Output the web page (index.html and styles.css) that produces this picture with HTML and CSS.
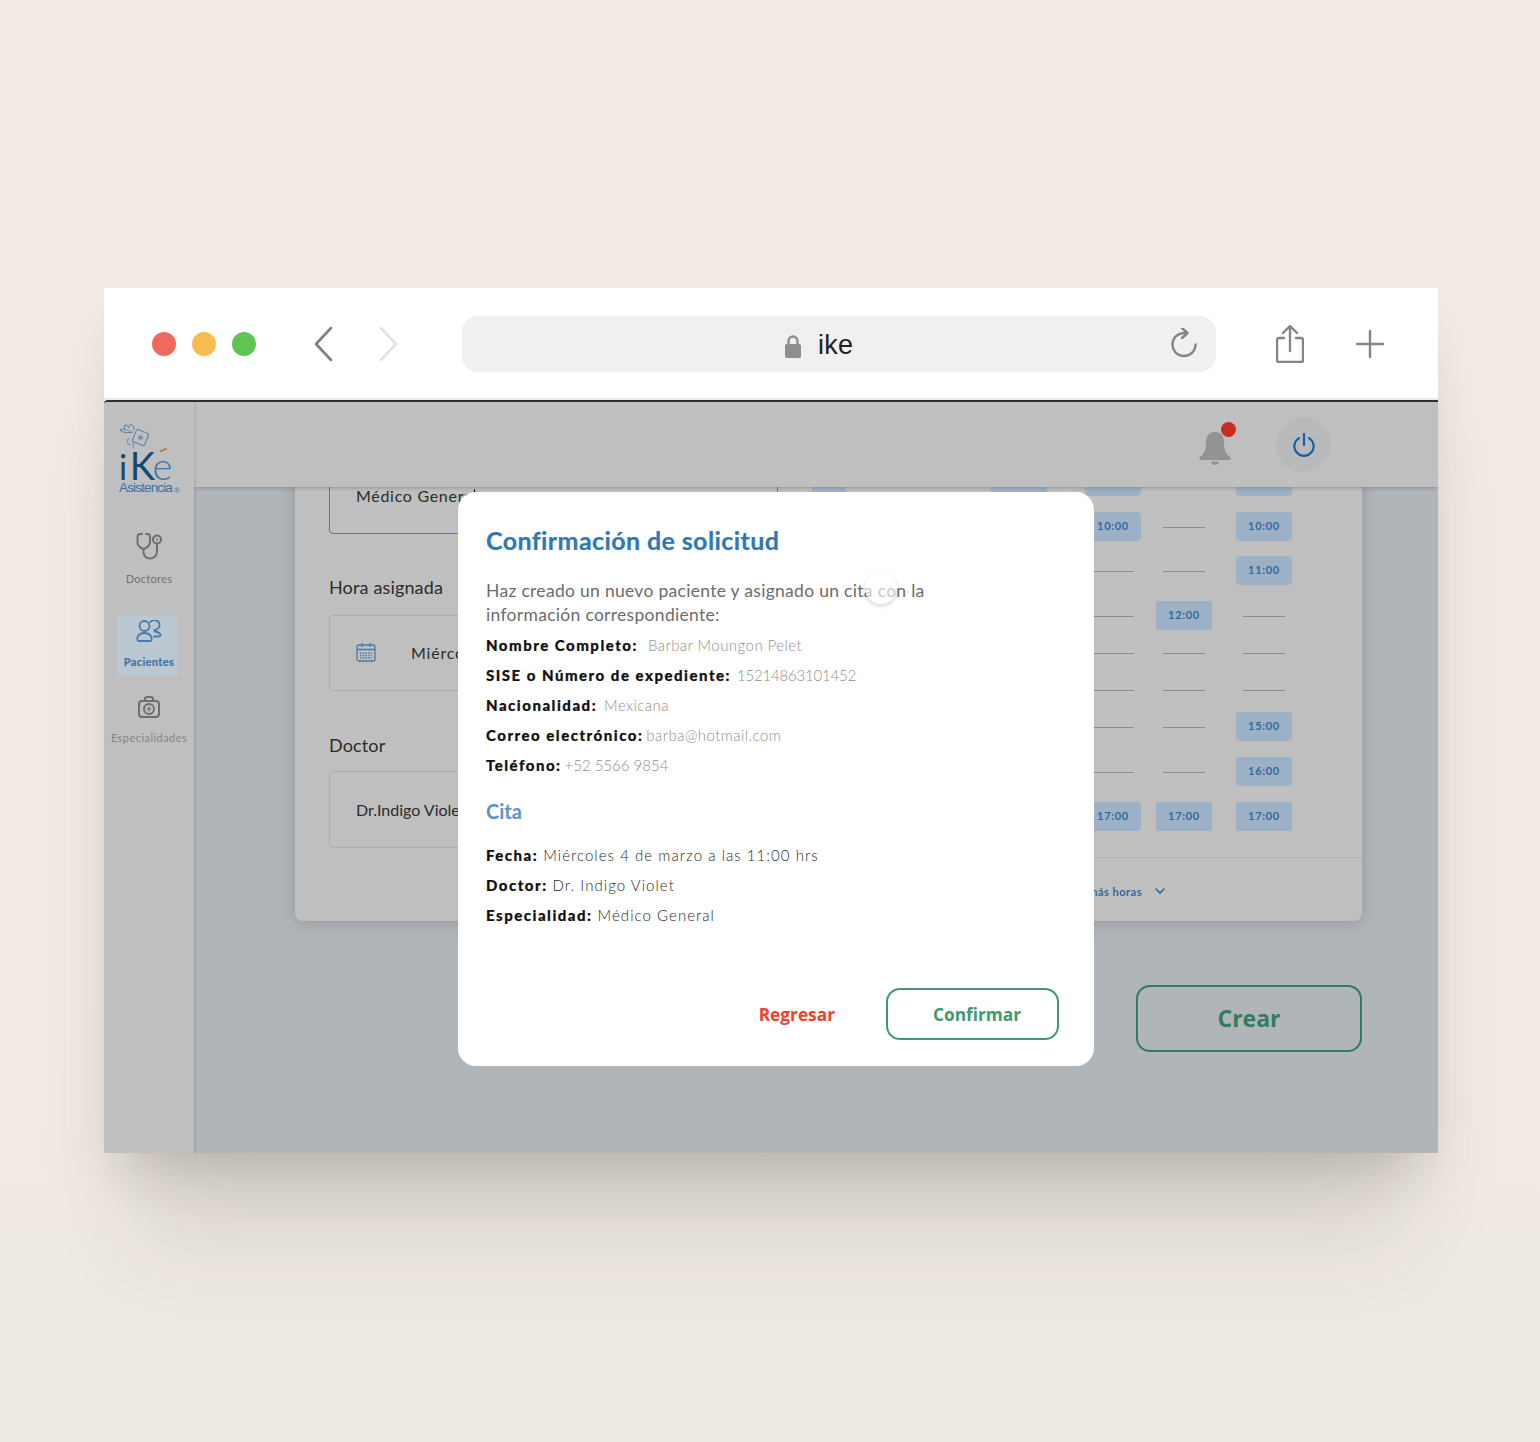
FILE: index.html
```html
<!DOCTYPE html>
<html lang="es">
<head>
<meta charset="utf-8">
<title>ike</title>
<link rel="stylesheet" href="styles.css">
</head>
<body>
<div class="window">
  <div class="toolbar">
    <div class="dots"><i class="dot red"></i><i class="dot yellow"></i><i class="dot green"></i></div>
    <div class="nav">
      <svg class="ico-nav" viewBox="0 0 20 36"><path d="M18 2 3 18l15 16" class="st-back"/></svg>
      <svg class="ico-nav" viewBox="0 0 20 36"><path d="M2 2l15 16L2 34" class="st-fwd"/></svg>
    </div>
    <div class="url">
      <svg class="lock" viewBox="0 0 16 23"><path d="M3.5 10V6a4.5 4.5 0 0 1 9 0v4" class="st-lock"/><rect x="0" y="9" width="16" height="14" rx="2" class="fill-lock"/></svg>
      <span class="url-text">ike</span>
      <svg class="reload" viewBox="0 0 26 30"><path d="M15 5.2A11.500 11.500 0 1 0 24.500 16.500M11 0l5.500 5L11 10" class="st-tool"/></svg>
    </div>
    <svg class="share" viewBox="0 0 28 38"><path d="M8 13H3a2 2 0 0 0-2 2v20a2 2 0 0 0 2 2h22a2 2 0 0 0 2-2V15a2 2 0 0 0-2-2h-5M14 26V2M7 8l7-7 7 7" class="st-tool"/></svg>
    <svg class="plus" viewBox="0 0 28 28"><path d="M14 1v26M1 14h26" class="st-tool"/></svg>
  </div>
  <div class="app">
    <aside class="sidebar">
      <div class="logo">
        <svg class="logo-mark" viewBox="0 0 32 28">
          <path d="M14 9C10 10 4 10 1 7c2-1 3-1 5-.5C5 5 5 3 6 2c2 0 3 1 4 2.500C10 3 11 1.500 12 1c2 1 3 3 3 6" class="st-logo"/>
          <path d="M6 6.500c2 .5 4 1.500 6 2M13 19l2 2-1 4M11 15l-3 2 1 4 3 1" class="st-logo-thin"/>
          <rect x="15" y="8" width="13" height="13" rx="2" transform="rotate(22 21.500 14.500)" class="st-logo"/>
          <path d="M21.500 11.500v6M18.500 14.500h6M19.300 12.300l4.400 4.400M23.700 12.300l-4.400 4.400" class="st-logo-thin"/>
        </svg>
        <div class="logo-word"><span class="logo-i">i</span><span class="logo-k">K</span><span class="logo-e">e</span><i class="logo-accent"></i></div>
        <div class="logo-sub">Asistencia<sup>®</sup></div>
      </div>
      <a class="side-item doctores">
        <svg class="ico-side" viewBox="0 0 26 28"><path d="M6 2H4Q1.500 2 1.500 5v5c0 3 2.500 6 6 7v3c0 4 3 6.500 6.500 6.500s7-2.500 7-7V12M10 2h1.500Q14 2 14 5v5c0 3-3 6-6.500 7" class="st-grey"/><circle cx="21" cy="7.500" r="4" class="st-grey"/><circle cx="21" cy="7.500" r="1" class="fill-grey"/></svg>
        <span>Doctores</span>
      </a>
      <a class="side-item active">
        <svg class="ico-side" viewBox="0 0 26 22"><circle cx="8.500" cy="6" r="5" class="st-blue"/><path d="M1.500 20c-1-4 2.500-7 7-7s8 3 7 7q-.3 1-1.500 1H3q-1.200 0-1.500-1z" class="st-blue"/><path d="M14.500 2a5 5 0 1 1 4 8v1.500c2 .5 6 .5 6 3.500 0 1-.5 1.500-1.500 1.500h-5" class="st-blue"/></svg>
        <span>Pacientes</span>
      </a>
      <a class="side-item especialidades">
        <svg class="ico-side" viewBox="0 0 22 22"><rect x="1" y="5" width="20" height="16" rx="3" class="st-grey"/><path d="M7 5V3q0-2 2-2h4q2 0 2 2v2" class="st-grey"/><circle cx="11" cy="13" r="5" class="st-grey"/><path d="M11 10.500v5M8.500 13h5" class="st-grey-thin"/></svg>
        <span>Especialidades</span>
      </a>
    </aside>
    <div class="content">
      <header class="topbar">
        <div class="bell">
          <svg class="bell-ico" viewBox="0 0 34 34"><path d="M17 1c-6 0-9 4-9 10 0 8-2 12-6 15-1.500 1-1 3 1 3h28c2 0 2.500-2 1-3-4-3-6-7-6-15 0-6-3-10-9-10z" class="fill-bell"/><path d="M13 30.500h8c0 2-2 3.500-4 3.500s-4-1.500-4-3.500z" class="fill-bell"/></svg>
          <i class="badge"></i>
        </div>
        <button class="power">
          <svg class="power-ico" viewBox="0 0 24 26"><path d="M12 1v12M6.500 5.500a10.500 10.500 0 1 0 11 0" class="st-power"/></svg>
        </button>
      </header>
      <main class="main">
        <section class="card">
          <div class="form">
            <div class="box select"><span class="select-text">Médico General</span><i class="caret"></i></div>
            <div class="label first">Hora asignada</div>
            <div class="box date">
              <svg class="cal" viewBox="0 0 20 20"><rect x="1" y="3" width="18" height="16" rx="2" class="st-cal"/><path d="M1 7.500h18M6 1v4M14 1v4" class="st-cal"/><path d="M4 11h12M4 13.500h12M4 16h12" class="st-dots"/></svg>
              <span class="box-date">Miércoles 4 de marzo a las 11:00 hrs</span>
            </div>
            <div class="label second">Doctor</div>
            <div class="box"><span class="box-doc">Dr.Indigo Violet</span></div>
          </div>
          <div class="schedule">
            <div class="slots">
              <div class="col c1"><b class="chip narrow">08:00</b></div>
              <div class="col c2"><b class="chip">09:00</b></div>
              <div class="col c3"><b class="chip">09:00</b><b class="chip">10:00</b><i class="dash"></i><i class="dash"></i><i class="dash"></i><i class="dash"></i><i class="dash"></i><i class="dash"></i><b class="chip">17:00</b></div>
              <div class="col c4"><span></span><i class="dash"></i><i class="dash"></i><b class="chip">12:00</b><i class="dash"></i><i class="dash"></i><i class="dash"></i><i class="dash"></i><b class="chip">17:00</b></div>
              <div class="col c5"><b class="chip">09:00</b><b class="chip">10:00</b><b class="chip">11:00</b><i class="dash"></i><i class="dash"></i><i class="dash"></i><b class="chip">15:00</b><b class="chip">16:00</b><b class="chip">17:00</b></div>
            </div>
            <div class="more">
              <span>Ver más horas</span>
              <svg class="chev" viewBox="0 0 10 7"><path d="M1 1l4 4 4-4" class="st-chev"/></svg>
            </div>
          </div>
        </section>
        <button class="crear">Crear</button>
      </main>
    </div>
    <div class="modal">
      <h1 class="m-title">Confirmación de solicitud</h1>
      <p class="m-intro">Haz creado un nuevo paciente y asignado un cita con la información correspondiente:</p>
      <div class="m-list">
        <p class="m-row"><b class="wide">Nombre Completo:</b><span>Barbar Moungon Pelet</span></p>
        <p class="m-row"><b>SISE o Número de expediente:</b><span class="tight">15214863101452</span></p>
        <p class="m-row"><b class="mid">Nacionalidad:</b><span>Mexicana</span></p>
        <p class="m-row"><b class="snug">Correo electrónico:</b><span>barba@hotmail.com</span></p>
        <p class="m-row"><b class="snug">Teléfono:</b><span class="tight-sm">+52 5566 9854</span></p>
      </div>
      <h2 class="m-sub">Cita</h2>
      <div class="m-list dark">
        <p class="m-row"><b>Fecha:</b><span>Miércoles 4 de marzo a las 11:00 hrs</span></p>
        <p class="m-row"><b>Doctor:</b><span>Dr. Indigo Violet</span></p>
        <p class="m-row"><b>Especialidad:</b><span>Médico General</span></p>
      </div>
      <div class="m-actions">
        <button class="back">Regresar</button>
        <button class="confirm">Confirmar</button>
      </div>
      <i class="ripple"></i>
    </div>
  </div>
</div>
</body>
</html>
```
FILE: styles.css
```css
* { box-sizing: border-box; }
html, body { margin: 0; height: 1442px; }
body {
  padding: 288px 102px 0 104px;
  background: linear-gradient(#f2eae5 0, #f2eae5 1000px, #eee9e3 1442px);
  font-family: "Lato", "Liberation Sans", sans-serif;
  overflow: hidden;
}
p, h1, h2 { margin: 0; }
button { font: inherit; cursor: pointer; }

.window {
  width: 1334px;
  height: 865px;
  display: flex;
  flex-direction: column;
  box-shadow: 0 30px 50px -20px rgba(50, 50, 40, .22), 0 110px 90px -30px rgba(50, 50, 40, .13);
}

/* browser chrome */
.toolbar {
  height: 112px;
  flex: none;
  background: #fff;
  display: flex;
  align-items: center;
  padding: 2px 0 0 48px;
  border-bottom: 2px solid #ecebea;
}
.dots { display: flex; gap: 16px; }
.dot { width: 24px; height: 24px; border-radius: 50%; }
.red { background: #f0695f; }
.yellow { background: #f5bd4f; }
.green { background: #5ec452; }
.nav { display: flex; gap: 46px; margin-left: 57px; }
.ico-nav { width: 20px; height: 36px; display: block; fill: none; }
.st-back, .st-fwd { fill: none; stroke-width: 2.6; stroke-linecap: round; stroke-linejoin: round; }
.st-back { stroke: #7f7f7f; }
.st-fwd { stroke: #e3e3e3; }
.url {
  width: 754px;
  height: 56px;
  margin-left: 63px;
  background: #f0f0f0;
  border-radius: 16px;
  display: flex;
  align-items: center;
  padding-left: 323px;
}
.lock { width: 16px; height: 23px; margin-top: 4px; }
.st-lock { fill: none; stroke: #8e8e8e; stroke-width: 2.4; }
.fill-lock { fill: #8e8e8e; }
.url-text {
  margin: 2px 0 0 17px;
  font: 27px/1 "Liberation Sans", sans-serif;
  color: #222;
  letter-spacing: .3px;
  width: 353px;
}
.reload { width: 26px; height: 30px; margin-top: -2px; }
.st-tool { fill: none; stroke: #858585; stroke-width: 2.4; stroke-linecap: round; stroke-linejoin: round; }
.share { width: 28px; height: 38px; margin-left: 60px; margin-top: -1px; }
.plus { width: 28px; height: 28px; margin-left: 52px; }

/* application */
.app {
  position: relative;
  flex: 1;
  display: flex;
  min-height: 0;
  border-top: 2px solid #2f2f2f;
  border-top-left-radius: 4px;
  background: #bfbfbf;
  overflow: hidden;
}
.sidebar {
  width: 90px;
  flex: none;
  background: #bfbfbf;
  box-shadow: 1px 0 3px rgba(0, 0, 0, .12);
  position: relative;
  z-index: 2;
  display: flex;
  flex-direction: column;
  align-items: center;
  color: #717171;
}
.logo { height: 94px; width: 90px; padding: 21px 0 0 15px; position: relative; flex: none; }
.logo-mark { display: block; width: 32px; height: 28px; }
.st-logo { fill: none; stroke: #4d7ca6; stroke-width: 1; stroke-linejoin: round; }
.st-logo-thin { fill: none; stroke: #4d7ca6; stroke-width: .7; }
.logo-word {
  font: 300 38px/32px "Lato", sans-serif;
  height: 30px;
  margin-top: -2px;
  position: relative;
  letter-spacing: -2.4px;
  white-space: nowrap;
}
.logo-i { color: #134a74; font-size: 34px; font-weight: 400; margin-right: 5px; }
.logo-k { color: #134a74; font-weight: 400; }
.logo-e { color: #3c76a8; }
.logo-accent {
  position: absolute;
  left: 41px;
  top: 0;
  width: 7px;
  height: 2px;
  background: #bb7a3c;
  transform: rotate(-22deg);
}
.logo-sub {
  font: 13.500px/14px "Liberation Sans", sans-serif;
  color: #3d6f9f;
  letter-spacing: -.85px;
  margin-top: 2px;
}
.logo-sub sup { font-size: 8px; line-height: 0; letter-spacing: 0; vertical-align: -1px; margin-left: 2px; }
.side-item {
  width: 61px;
  display: flex;
  flex-direction: column;
  align-items: center;
  flex: none;
  font-size: 11px;
  line-height: 14px;
  white-space: nowrap;
}
.doctores { margin-top: 36px; height: 62px; gap: 12px; letter-spacing: .3px; }
.ico-side { display: block; fill: none; }
.doctores .ico-side { width: 26px; height: 28px; }
.active {
  align-self: flex-start;
  margin: 21px 0 0 13px;
  height: 60px;
  padding: 5px 0 0 3px;
  background: #bcc8d1;
  color: #3f74a6;
  font-weight: 700;
  letter-spacing: .4px;
  -webkit-text-stroke: .2px #3f74a6;
  gap: 13px;
}
.active .ico-side { width: 26px; height: 22px; }
.especialidades { margin-top: 21px; gap: 13px; color: #858585; letter-spacing: .45px; }
.especialidades .ico-side { width: 22px; height: 22px; }
.st-grey { fill: none; stroke: #6e6e6e; stroke-width: 2; stroke-linecap: round; stroke-linejoin: round; }
.st-grey-thin { fill: none; stroke: #6e6e6e; stroke-width: 1.200; }
.fill-grey { fill: #6e6e6e; }
.st-blue { fill: none; stroke: #4a7aa8; stroke-width: 1.800; stroke-linecap: round; stroke-linejoin: round; }

.content { flex: 1; min-width: 0; display: flex; flex-direction: column; }
.topbar {
  height: 85px;
  flex: none;
  background: #bfbfbf;
  box-shadow: 0 1px 4px rgba(0, 0, 0, .22);
  position: relative;
  z-index: 1;
  display: flex;
  align-items: center;
  justify-content: flex-end;
  padding-right: 107px;
}
.bell { position: relative; width: 34px; height: 34px; margin-right: 44px; margin-top: 6px; }
.bell-ico { display: block; width: 34px; height: 34px; }
.fill-bell { fill: #939393; }
.badge {
  position: absolute;
  right: -4px;
  top: -9px;
  width: 15px;
  height: 15px;
  border-radius: 50%;
  background: #c92d20;
}
.power {
  width: 55px;
  height: 55px;
  padding: 0;
  border: 0;
  border-radius: 50%;
  background: #b8b9bb;
  display: flex;
  align-items: center;
  justify-content: center;
}
.power-ico { width: 22px; height: 24px; }
.st-power { fill: none; stroke: #1a5fa8; stroke-width: 2.400; stroke-linecap: round; }

.main {
  flex: 1;
  min-height: 0;
  overflow: hidden;
  background: #b0b5b9;
  padding: 0 76px 0 101px;
  display: flex;
  flex-direction: column;
}
.card {
  height: 494px;
  flex: none;
  margin-top: -60px;
  background: #bfbfbf;
  border-radius: 8px;
  box-shadow: 0 2px 16px rgba(0, 0, 0, .16);
  display: flex;
  padding-left: 34px;
}
.form { width: 449px; flex: none; padding-top: 23px; color: #2b2b2b; }
.box {
  height: 77px;
  border: 1px solid #adadad;
  border-radius: 4px;
  display: flex;
  align-items: center;
  padding-left: 26px;
  font-size: 16px;
  white-space: nowrap;
  overflow: hidden;
}
.date { height: 76px; padding-bottom: 2px; }
.select {
  height: 84px;
  border-color: #4f80ab;
  align-items: flex-start;
  padding-top: 35px;
  position: relative;
  letter-spacing: .7px;
}
.caret {
  position: absolute;
  left: 144px;
  top: 38px;
  width: 1px;
  height: 8px;
  background: #2b2b2b;
}
.label { font-size: 18px; line-height: 24px; letter-spacing: .15px; }
.label.first { margin: 41px 0 16px; }
.label.second { margin: 42px 0 14px; }
.cal { width: 20px; height: 20px; flex: none; }
.st-cal { fill: none; stroke: #4a7aa8; stroke-width: 1.300; }
.st-dots { fill: none; stroke: #4a7aa8; stroke-width: 1.500; stroke-dasharray: 1.500 1.300; }
.box-date { margin-left: 35px; letter-spacing: .8px; }

.schedule { flex: 1; min-width: 0; display: flex; flex-direction: column; padding-top: 40px; }
.slots { display: flex; padding-left: 34px; flex: 1; }
.col {
  width: 56px;
  display: grid;
  grid-template-rows: 45px 44px 45px 37px 37px 37px 45px 45px 29px;
  justify-items: center;
  align-content: start;
}
.c1 { width: 33px; }
.c2 { margin-left: 146px; }
.c3 { margin-left: 38px; }
.c4 { margin-left: 15px; }
.c5 { margin-left: 24px; }
.chip {
  width: 56px;
  height: 29px;
  border-radius: 4px;
  background: #9db1c6;
  color: #33689c;
  font-size: 11px;
  font-weight: 700;
  line-height: 27px;
  text-align: center;
  letter-spacing: .7px;
}
.chip.narrow { width: 33px; overflow: hidden; }
.dash {
  width: 42px;
  height: 1px;
  margin-top: 15px;
  background: #8d8d8d;
}
.more {
  height: 64px;
  flex: none;
  border-top: 1px solid #b0b0b0;
  display: flex;
  align-items: center;
  justify-content: flex-end;
  padding: 4px 197px 0 0;
  color: #33689c;
  font-size: 11px;
  font-weight: 700;
  letter-spacing: .5px;
  gap: 13px;
}
.chev { width: 10px; height: 7px; }
.st-chev { fill: none; stroke: #33689c; stroke-width: 1.600; stroke-linecap: round; }
.crear {
  width: 226px;
  height: 67px;
  flex: none;
  margin: 64px 0 0 auto;
  background: transparent;
  border: 2px solid #337b5c;
  border-radius: 14px;
  color: #337b5c;
  font: 700 23px/1 "Open Sans", sans-serif;
}

/* confirmation dialog, over the dimmed application */
.modal {
  position: absolute;
  left: 354px;
  top: 90px;
  width: 636px;
  height: 574px;
  background: #fff;
  border-radius: 18px;
  padding: 32px 35px 0 28px;
  z-index: 5;
}
.m-title {
  font-size: 25px;
  line-height: 32px;
  font-weight: 700;
  letter-spacing: .4px;
  color: #2f77b8;
  -webkit-text-stroke: .2px #2f77b8;
}
.m-intro {
  margin-top: 23px;
  width: 450px;
  font-size: 17.500px;
  line-height: 24px;
  letter-spacing: .3px;
  color: #6c6c6c;
}
.m-list { margin-top: 3px; }
.m-row { font-size: 15px; line-height: 30px; letter-spacing: .45px; white-space: nowrap; }
.m-row b {
  color: #111;
  font-weight: 900;
  letter-spacing: 1.500px;
  margin-right: 6px;
  -webkit-text-stroke: .2px #111;
}
.m-row b.wide { margin-right: 10px; }
.m-row b.mid { margin-right: 7px; }
.m-row b.snug { margin-right: 3px; }
.m-row span { color: #8f8f8f; font-weight: 300; }
.m-row .tight { letter-spacing: -.2px; }
.m-row .tight-sm { letter-spacing: 0; }
.m-sub { margin-top: 16px; font-size: 20px; line-height: 30px; font-weight: 700; color: #5b93cf; }
.m-list.dark { margin-top: 14px; }
.dark .m-row b { margin-right: 5px; }
.dark .m-row span { color: #2a2a2a; letter-spacing: 1.050px; }
.m-actions {
  margin-top: 58px;
  display: flex;
  justify-content: flex-end;
  align-items: center;
  gap: 51px;
}
.back, .confirm { font: 700 17.300px/1 "Open Sans", sans-serif; background: none; }
.back { border: 0; color: #f04030; padding: 2px 0 0; }
.confirm {
  width: 173px;
  height: 52px;
  padding: 2px 0 0 9px;
  border: 2px solid #3f9a72;
  border-radius: 14px;
  color: #3f9a72;
}
.ripple {
  position: absolute;
  left: 407px;
  top: 80px;
  width: 32px;
  height: 32px;
  border-radius: 50%;
  background: rgba(255, 255, 255, .62);
  box-shadow: 0 2px 4px rgba(0, 0, 0, .18);
}
```
